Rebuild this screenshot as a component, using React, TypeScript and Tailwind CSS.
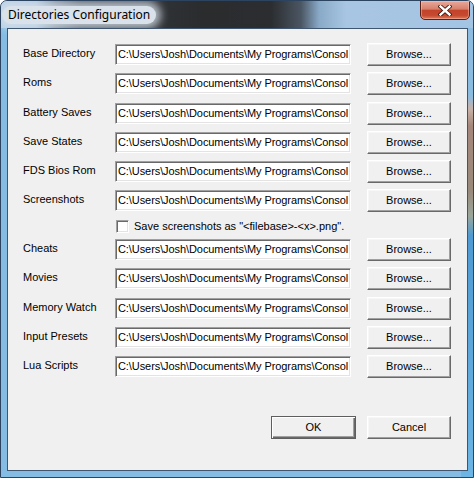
const PATH = "C:\\Users\\Josh\\Documents\\My Programs\\Consol";

const ROWS_TOP = [
  { label: "Base Directory", mt: "mt-[14px]" },
  { label: "Roms", mt: "mt-[6px]" },
  { label: "Battery Saves", mt: "mt-[7px]" },
  { label: "Save States", mt: "mt-[6px]" },
  { label: "FDS Bios Rom", mt: "mt-[6px]" },
  { label: "Screenshots", mt: "mt-[6px]" }
];

const ROWS_BOTTOM = [
  { label: "Cheats", mt: "mt-[5px]" },
  { label: "Movies", mt: "mt-[6px]" },
  { label: "Memory Watch", mt: "mt-[7px]" },
  { label: "Input Presets", mt: "mt-[6px]" },
  { label: "Lua Scripts", mt: "mt-[6px]" }
];

function DirRow({ label, mt }: { label: string; mt: string }) {
  return (
    <div className={`flex items-center h-[23px] ${mt}`}>
      <span className="w-[92px] shrink-0 -mt-[3px]">{label}</span>
      <div className="w-[236px] h-[21px] shrink-0 bg-white border border-t-[#a0a0a0] border-l-[#a0a0a0] border-r-white border-b-white shadow-[inset_1px_1px_0_#696969,inset_-1px_-1px_0_#e3e3e3] pl-[2px] overflow-hidden whitespace-nowrap leading-[19px] tracking-[-0.08px]">
        {PATH}
      </div>
      <WinButton className="ml-[16px]">Browse...</WinButton>
    </div>
  );
}

function WinButton({
  children,
  className = "",
  primary = false
}: {
  children: React.ReactNode;
  className?: string;
  primary?: boolean;
}) {
  return (
    <button
      className={`w-[84px] h-[23px] shrink-0 bg-[#f0f0f0] flex items-center justify-center leading-none ${
        primary
          ? "border border-[#5e5e5e] shadow-[inset_1px_1px_0_#fff,inset_-1px_-1px_0_#696969,inset_-2px_-2px_0_#a0a0a0]"
          : "border border-t-white border-l-white border-r-[#696969] border-b-[#696969] shadow-[inset_-1px_-1px_0_#a0a0a0,inset_1px_1px_0_#f7f7f7]"
      } ${className}`}
    >
      {children}
    </button>
  );
}

function CloseGlyph() {
  return (
    <svg width="14" height="11" viewBox="0 0 14 11">
      <path
        d="M2.5 1.5 L11.5 9.5 M11.5 1.5 L2.5 9.5"
        stroke="#3b1a14"
        strokeWidth="4.2"
        strokeLinecap="square"
      />
      <path
        d="M2.5 1.5 L11.5 9.5 M11.5 1.5 L2.5 9.5"
        stroke="#ffffff"
        strokeWidth="2.4"
        strokeLinecap="square"
      />
    </svg>
  );
}

export default function App() {
  return (
    <div className="w-[474px] h-[478px] flex flex-col rounded-t-[7px] border border-[#2c4460] overflow-hidden bg-[linear-gradient(90deg,#84bce4_0_460px,transparent_460px),linear-gradient(180deg,#8fbde2_0px,#8cbbe0_95px,#c9b2a8_108px,#a5877a_125px,#998a7c_190px,#9aa79a_215px,#4f9ad2_235px,#6cb5e4_478px)]">
      {/* Title bar */}
      <div className="h-[27px] shrink-0 flex items-start justify-between bg-[linear-gradient(90deg,#b4cfe8_0px,#a8c4de_35px,#6d7b89_55px,#3a3f45_80px,#2a2c2e_200px,#2b2d30_270px,#4b5663_300px,#88a9c7_318px,#a8c6e3_345px,#a4c4e3_474px)]">
        <span className="ml-[1px] mt-[5px] px-[6px] h-[18px] leading-[18px] rounded-[9px] bg-[#d9e1ea] shadow-[0_0_9px_5px_rgba(214,224,234,0.8)] text-[12px] text-black [font-family:'Noto_Sans','Open_Sans',sans-serif]">
          Directories Configuration
        </span>
        <div className="mr-[3px] -mt-px w-[50px] h-[20px] rounded-b-[5px] border border-[#5b2016] bg-[linear-gradient(180deg,#e9a99b_0%,#d8806c_45%,#c2432a_52%,#c64a2f_80%,#e07a56_100%)] shadow-[inset_0_0_0_1px_rgba(255,200,190,0.45)] flex items-center justify-center">
          <CloseGlyph />
        </div>
      </div>

      {/* Client area */}
      <div className="ml-[6px] mr-[5px] h-[443px] shrink-0 border border-[#3e5670] bg-[#f0f0f0] pl-[15px] flex flex-col text-[11px] text-black [font-family:'Liberation_Sans',Arial,sans-serif]">
        {ROWS_TOP.map((r) => (
          <DirRow key={r.label} label={r.label} mt={r.mt} />
        ))}

        <div className="flex items-center h-[13px] mt-[8px] ml-[93px]">
          <span className="w-[13px] h-[13px] bg-white border border-t-[#a0a0a0] border-l-[#a0a0a0] border-r-white border-b-white shadow-[inset_1px_1px_0_#696969,inset_-1px_-1px_0_#e3e3e3]" />
          <span className="ml-[5px] -mt-px">
            Save screenshots as "&lt;filebase&gt;-&lt;x&gt;.png".
          </span>
        </div>

        {ROWS_BOTTOM.map((r) => (
          <DirRow key={r.label} label={r.label} mt={r.mt} />
        ))}

        <div className="flex mt-[38px] ml-[248px]">
          <WinButton primary className="!w-[85px]">
            OK
          </WinButton>
          <WinButton className="ml-[11px]">Cancel</WinButton>
        </div>
      </div>

      {/* Bottom frame */}
      <div className="flex-1" />
    </div>
  );
}
